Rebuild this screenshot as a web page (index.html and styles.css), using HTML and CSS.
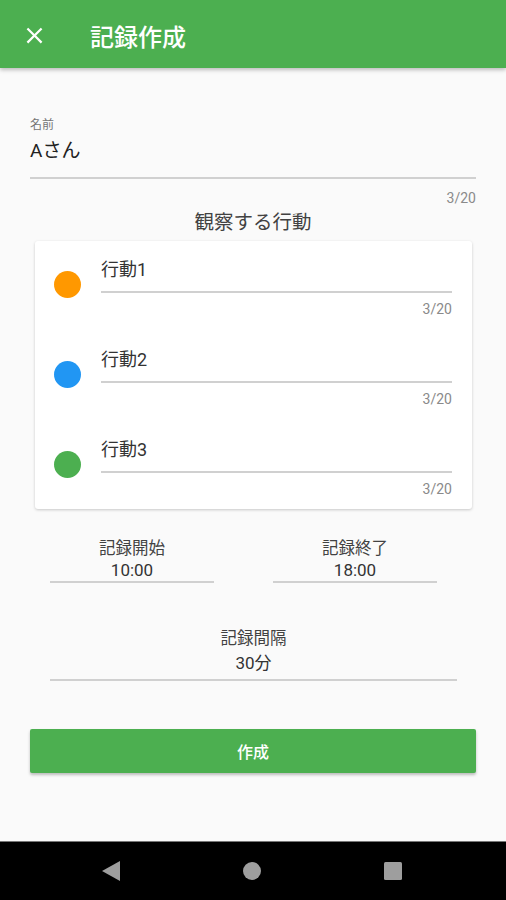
FILE: index.html
```html
<!DOCTYPE html>
<html lang="ja">
<head>
    <meta charset="UTF-8" />
    <meta name="viewport" content="width=device-width, initial-scale=1.0" />
    <title>記録作成</title>
    <link rel="stylesheet" href="styles.css">
</head>
<body>
    <div class="screen">
        <header class="app-bar">
            <svg class="close-icon" width="27" height="27" viewBox="0 0 24 24">
                <path d="M19 6.41L17.59 5 12 10.59 6.41 5 5 6.41 10.59 12 5 17.59 6.41 19 12 13.41 17.59 19 19 17.59 13.41 12z" fill="#fff" />
            </svg>
            <h1 class="app-title">記録作成</h1>
        </header>

        <main class="content">
            <div class="field name-field">
                <label class="field-label">名前</label>
                <div class="field-value">Aさん</div>
                <div class="counter">3/20</div>
            </div>

            <h2 class="section-title">観察する行動</h2>

            <div class="card">
                <div class="behavior">
                    <span class="dot dot-orange"></span>
                    <div class="behavior-input">
                        <div class="behavior-value">行動1</div>
                        <div class="counter">3/20</div>
                    </div>
                </div>
                <div class="behavior">
                    <span class="dot dot-blue"></span>
                    <div class="behavior-input">
                        <div class="behavior-value">行動2</div>
                        <div class="counter">3/20</div>
                    </div>
                </div>
                <div class="behavior">
                    <span class="dot dot-green"></span>
                    <div class="behavior-input">
                        <div class="behavior-value">行動3</div>
                        <div class="counter">3/20</div>
                    </div>
                </div>
            </div>

            <div class="time-row">
                <div class="picker">
                    <div class="picker-label">記録開始</div>
                    <div class="picker-value">10:00</div>
                </div>
                <div class="picker">
                    <div class="picker-label">記録終了</div>
                    <div class="picker-value">18:00</div>
                </div>
            </div>

            <div class="picker interval">
                <div class="picker-label">記録間隔</div>
                <div class="picker-value">30分</div>
            </div>

            <button class="create-btn" type="button">作成</button>
        </main>

        <nav class="nav-bar">
            <svg width="20" height="22" viewBox="0 0 20 22"><path d="M19 1 L1 11 L19 21 Z" fill="#9e9e9e" /></svg>
            <svg width="20" height="20" viewBox="0 0 20 20"><circle cx="10" cy="10" r="9" fill="#9e9e9e" /></svg>
            <svg width="20" height="20" viewBox="0 0 20 20"><rect x="1" y="1" width="18" height="18" rx="1.5" fill="#9e9e9e" /></svg>
        </nav>
    </div>
</body>
</html>
```

FILE: styles.css
```css
body {
    margin: 0;
    font-family: Roboto, "Noto Sans CJK JP", sans-serif;
    background-color: #fafafa;
    color: #212121;
}

.screen {
    width: 506px;
    height: 900px;
    display: flex;
    flex-direction: column;
    overflow: hidden;
}

.app-bar {
    height: 66px;
    padding: 2px 0 0 21px;
    flex-shrink: 0;
    background-color: #4caf50;
    display: flex;
    align-items: center;
    box-shadow: 0 2px 4px rgba(0, 0, 0, 0.25);
    position: relative;
    z-index: 1;
}

.close-icon {
    width: 27px;
    height: 27px;
}

.app-title {
    margin: 0 0 0 42px;
    font-size: 24px;
    font-weight: 500;
    color: #fff;
}

.content {
    flex: 1;
    padding: 0 30px;
    display: flex;
    flex-direction: column;
}

.field-label {
    display: block;
    margin-top: 49px;
    font-size: 12px;
    line-height: 16px;
    color: #757575;
}

.field-value {
    margin-top: 4px;
    font-size: 19px;
    line-height: 28px;
    padding-bottom: 12px;
    border-bottom: 2px solid #d0d0d0;
}

.counter {
    text-align: right;
    font-size: 14px;
    line-height: 16px;
    margin-top: 11px;
    color: #8a8a8a;
}

.section-title {
    margin: 5px 0 0;
    text-align: center;
    font-size: 19.5px;
    font-weight: normal;
    line-height: 24px;
    color: #424242;
}

.card {
    margin: 6px 4px 0 5px;
    background: #fff;
    border-radius: 3px;
    box-shadow: 0 1px 3px rgba(0, 0, 0, 0.2);
    padding: 16px 20px 12px 19px;
}

.behavior {
    display: flex;
    align-items: flex-start;
}

.behavior + .behavior {
    margin-top: 30px;
}

.dot {
    width: 27px;
    height: 27px;
    border-radius: 50%;
    margin-top: 14px;
    flex-shrink: 0;
}

.dot-orange { background: #ff9800; }
.dot-blue { background: #2196f3; }
.dot-green { background: #4caf50; }

.behavior-input {
    flex: 1;
    margin-left: 20px;
}

.behavior-value {
    font-size: 18px;
    line-height: 26px;
    padding-bottom: 8px;
    border-bottom: 2px solid #d0d0d0;
    color: #333;
}

.behavior-input .counter {
    margin-top: 8px;
}

.time-row {
    display: flex;
    justify-content: space-between;
    margin: 29px 39px 0 20px;
}

.picker {
    width: 164px;
    text-align: center;
    border-bottom: 2px solid #d0d0d0;
}

.picker-label {
    font-size: 16.5px;
    line-height: 22px;
    color: #424242;
}

.picker-value {
    font-size: 17px;
    line-height: 20px;
    padding-bottom: 1px;
    color: #333;
}

.interval {
    width: auto;
    margin: 45px 19px 0 20px;
}

.interval .picker-label {
    margin-bottom: 3px;
}

.interval .picker-value {
    padding-bottom: 6px;
}

.create-btn {
    margin-top: 48px;
    height: 44px;
    background-color: #4caf50;
    color: #fff;
    border: none;
    border-radius: 2px;
    font-family: inherit;
    font-size: 16px;
    font-weight: 500;
    box-shadow: 0 2px 3px rgba(0, 0, 0, 0.25);
}

.nav-bar {
    height: 58px;
    flex-shrink: 0;
    background: #000;
    border-top: 1px solid #777;
    display: flex;
    align-items: center;
    justify-content: space-between;
    padding: 0 103px 0 101px;
}
```
